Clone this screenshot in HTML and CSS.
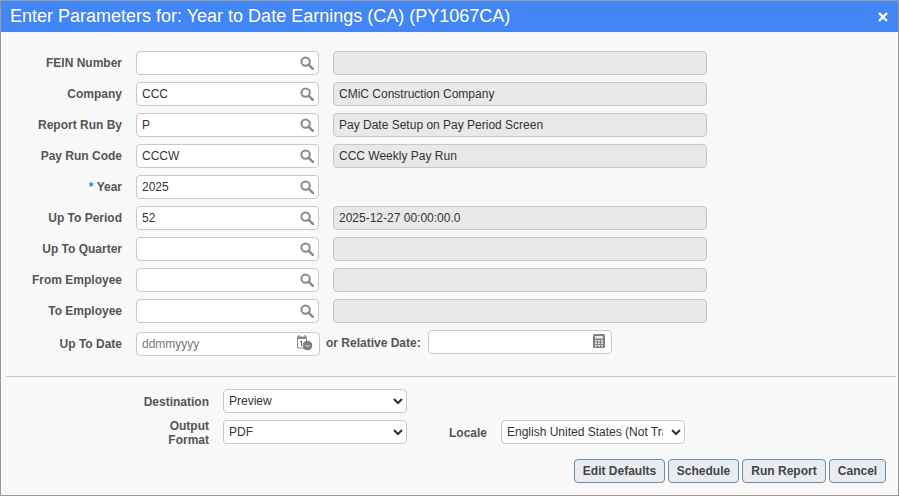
FILE: index.html
```html
<!DOCTYPE html>
<html>

<head>
    <meta charset="utf-8">
    <meta name="viewport" content="width=device-width, initial-scale=1.0">
    <title>Enter Parameters</title>
    <link rel="stylesheet" href="styles.css">
</head>

<body>
    <svg class="iconDefs" width="0" height="0">
        <symbol id="searchIcon" viewBox="0 0 14 14">
            <circle cx="5.6" cy="5.6" r="4.2" fill="none" stroke="#8a8a8a" stroke-width="2"/>
            <path d="M8.8 8.8l4 4" fill="none" stroke="#8a8a8a" stroke-width="2.6" stroke-linecap="round"/>
        </symbol>
    </svg>

    <div class="dialog">
        <div class="titleBar">
            <span class="titleText">Enter Parameters for: Year to Date Earnings (CA) (PY1067CA)</span>
            <svg class="closeIcon" width="10" height="10" viewBox="0 0 10 10">
                <path d="M1 1l8 8M9 1l-8 8" stroke="#fff" stroke-width="2.4"/>
            </svg>
        </div>

        <div class="params">
            <div class="row">
                <label class="rowLabel">FEIN Number</label>
                <div class="lookup"><input class="field" type="text"><svg class="searchIcon"><use href="#searchIcon"/></svg></div>
                <div class="readonly"></div>
            </div>
            <div class="row">
                <label class="rowLabel">Company</label>
                <div class="lookup"><input class="field" type="text" value="CCC"><svg class="searchIcon"><use href="#searchIcon"/></svg></div>
                <div class="readonly">CMiC Construction Company</div>
            </div>
            <div class="row">
                <label class="rowLabel">Report Run By</label>
                <div class="lookup"><input class="field" type="text" value="P"><svg class="searchIcon"><use href="#searchIcon"/></svg></div>
                <div class="readonly">Pay Date Setup on Pay Period Screen</div>
            </div>
            <div class="row">
                <label class="rowLabel">Pay Run Code</label>
                <div class="lookup"><input class="field" type="text" value="CCCW"><svg class="searchIcon"><use href="#searchIcon"/></svg></div>
                <div class="readonly">CCC Weekly Pay Run</div>
            </div>
            <div class="row">
                <label class="rowLabel"><span class="required">*</span> Year</label>
                <div class="lookup"><input class="field" type="text" value="2025"><svg class="searchIcon"><use href="#searchIcon"/></svg></div>
            </div>
            <div class="row">
                <label class="rowLabel">Up To Period</label>
                <div class="lookup"><input class="field" type="text" value="52"><svg class="searchIcon"><use href="#searchIcon"/></svg></div>
                <div class="readonly">2025-12-27 00:00:00.0</div>
            </div>
            <div class="row">
                <label class="rowLabel">Up To Quarter</label>
                <div class="lookup"><input class="field" type="text"><svg class="searchIcon"><use href="#searchIcon"/></svg></div>
                <div class="readonly"></div>
            </div>
            <div class="row">
                <label class="rowLabel">From Employee</label>
                <div class="lookup"><input class="field" type="text"><svg class="searchIcon"><use href="#searchIcon"/></svg></div>
                <div class="readonly"></div>
            </div>
            <div class="row">
                <label class="rowLabel">To Employee</label>
                <div class="lookup"><input class="field" type="text"><svg class="searchIcon"><use href="#searchIcon"/></svg></div>
                <div class="readonly"></div>
            </div>
            <div class="dateRow">
                <label class="rowLabel">Up To Date</label>
                <div class="lookup dateLookup">
                    <input class="field" type="text" placeholder="ddmmyyyy">
                    <svg class="dateIcon" width="17" height="16" viewBox="0 0 17 16">
                        <path d="M1.5 3h9v10h-9z" fill="#fff" stroke="#8a8a8a"/>
                        <path d="M1 1.5h10v2.5h-10z" fill="#8a8a8a"/>
                        <path d="M3 0v2M9 0v2" stroke="#8a8a8a" stroke-width="1.4"/>
                        <path d="M4 7l1.5-1v5" fill="none" stroke="#666"/>
                        <circle cx="11.5" cy="10.5" r="4.8" fill="#7d7d7d"/>
                        <path d="M9.5 10.5l2 .8 2.2-.5" fill="none" stroke="#fff" stroke-width=".9"/>
                    </svg>
                </div>
                <label class="relativeLabel">or Relative Date:</label>
                <div class="lookup relativeLookup">
                    <input class="field" type="text">
                    <svg class="calcIcon" width="12" height="14" viewBox="0 0 12 14">
                        <rect width="12" height="14" rx="1.5" fill="#808080"/>
                        <rect x="2" y="2" width="8" height="2.5" fill="#e8e8e8"/>
                        <path d="M2 6h2v1.5h-2zM5 6h2v1.5h-2zM8 6h2v1.5h-2zM2 8.5h2v1.5h-2zM5 8.5h2v1.5h-2zM8 8.5h2v1.5h-2zM2 11h2v1.5h-2zM5 11h2v1.5h-2zM8 11h2v1.5h-2z" fill="#e8e8e8"/>
                    </svg>
                </div>
            </div>
        </div>

        <hr class="divider">

        <div class="output">
            <div class="outputRow">
                <label class="outputLabel">Destination</label>
                <select class="choice">
                    <option>Preview</option>
                </select>
            </div>
            <div class="outputRow">
                <label class="outputLabel">Output Format</label>
                <select class="choice">
                    <option>PDF</option>
                </select>
                <label class="localeLabel">Locale</label>
                <select class="choice localeChoice">
                    <option>English United States (Not Translated)</option>
                </select>
            </div>
        </div>

        <div class="actions">
            <button class="action editDefaults">Edit Defaults</button>
            <button class="action schedule">Schedule</button>
            <button class="action runReport">Run Report</button>
            <button class="action cancel">Cancel</button>
        </div>
    </div>
</body>
</html>
```

FILE: styles.css
```css
html, body {
    height: 100%;
}

body {
    margin: 0;
    font-family: "Liberation Sans", Arial, sans-serif;
    font-size: 12px;
    color: #333;
}

.iconDefs {
    display: block;
}

.dialog {
    box-sizing: border-box;
    width: 899px;
    height: 496px;
    border: 1px solid #999;
    background-color: #f9f9f9;
}

.titleBar {
    display: flex;
    justify-content: space-between;
    align-items: center;
    height: 31px;
    padding: 0 10px 0 9px;
    background-color: #4285f4;
    color: white;
}

.titleText {
    font-size: 18px;
}

.params {
    display: flex;
    flex-direction: column;
    gap: 7px;
    padding-top: 19px;
}

.row,
.dateRow {
    display: flex;
    align-items: center;
    height: 24px;
}

.rowLabel {
    width: 121px;
    margin-right: 14px;
    text-align: right;
    font-weight: bold;
    color: #555;
}

.required {
    color: #2f7fe0;
}

.lookup {
    display: flex;
    position: relative;
    width: 183px;
    height: 24px;
    margin-right: 14px;
}

.field {
    box-sizing: border-box;
    width: 100%;
    height: 100%;
    padding: 0 5px;
    border: 1px solid #c8c8c8;
    border-radius: 4px;
    background-color: white;
    font: inherit;
    color: #333;
}

.field::placeholder {
    color: #777;
}

.searchIcon {
    position: absolute;
    top: 5px;
    right: 5px;
    width: 14px;
    height: 14px;
}

.readonly {
    box-sizing: border-box;
    width: 374px;
    height: 24px;
    padding: 0 5px;
    border: 1px solid #c8c8c8;
    border-radius: 4px;
    background-color: #e9e9e9;
    line-height: 22px;
}

.dateRow {
    margin-top: 2px;
}

.dateLookup {
    width: 184px;
    margin-right: 6px;
}

.dateIcon {
    position: absolute;
    top: 3px;
    right: 7px;
}

.relativeLabel {
    width: 95px;
    margin-right: 7px;
    margin-bottom: 3px;
    font-weight: bold;
    color: #555;
}

.relativeLookup {
    width: 184px;
    margin-top: -4px;
}

.calcIcon {
    position: absolute;
    top: 4px;
    right: 7px;
}

.divider {
    height: 1px;
    margin: 20px 2px 12px 5px;
    border: none;
    background-color: #c8c8c8;
}

.output {
    display: flex;
    flex-direction: column;
    gap: 7px;
}

.outputRow {
    display: flex;
    align-items: center;
    height: 24px;
}

.outputLabel {
    box-sizing: border-box;
    width: 208px;
    margin-right: 14px;
    padding-top: 2px;
    padding-left: 130px;
    text-align: right;
    font-weight: bold;
    color: #555;
    line-height: 14px;
}

.choice {
    box-sizing: border-box;
    width: 184px;
    height: 24px;
    padding: 0 1px;
    border: 1px solid #c8c8c8;
    border-radius: 4px;
    background-color: white;
    font: inherit;
    color: #333;
}

.localeChoice {
    padding-right: 5px;
}

.localeLabel {
    width: 52px;
    margin-left: 42px;
    padding-top: 2px;
    color: #555;
    font-weight: bold;
}

.actions {
    display: flex;
    justify-content: flex-end;
    gap: 3px;
    margin-top: 15px;
    padding-right: 12px;
}

.action {
    box-sizing: border-box;
    height: 24px;
    padding: 0;
    border: 1px solid #6f8ba5;
    border-radius: 4px;
    background-color: #e9edf1;
    font: inherit;
    font-weight: bold;
    color: #444;
}

.editDefaults {
    width: 91px;
}

.schedule {
    width: 71px;
}

.runReport {
    width: 84px;
}

.cancel {
    width: 57px;
}
```
